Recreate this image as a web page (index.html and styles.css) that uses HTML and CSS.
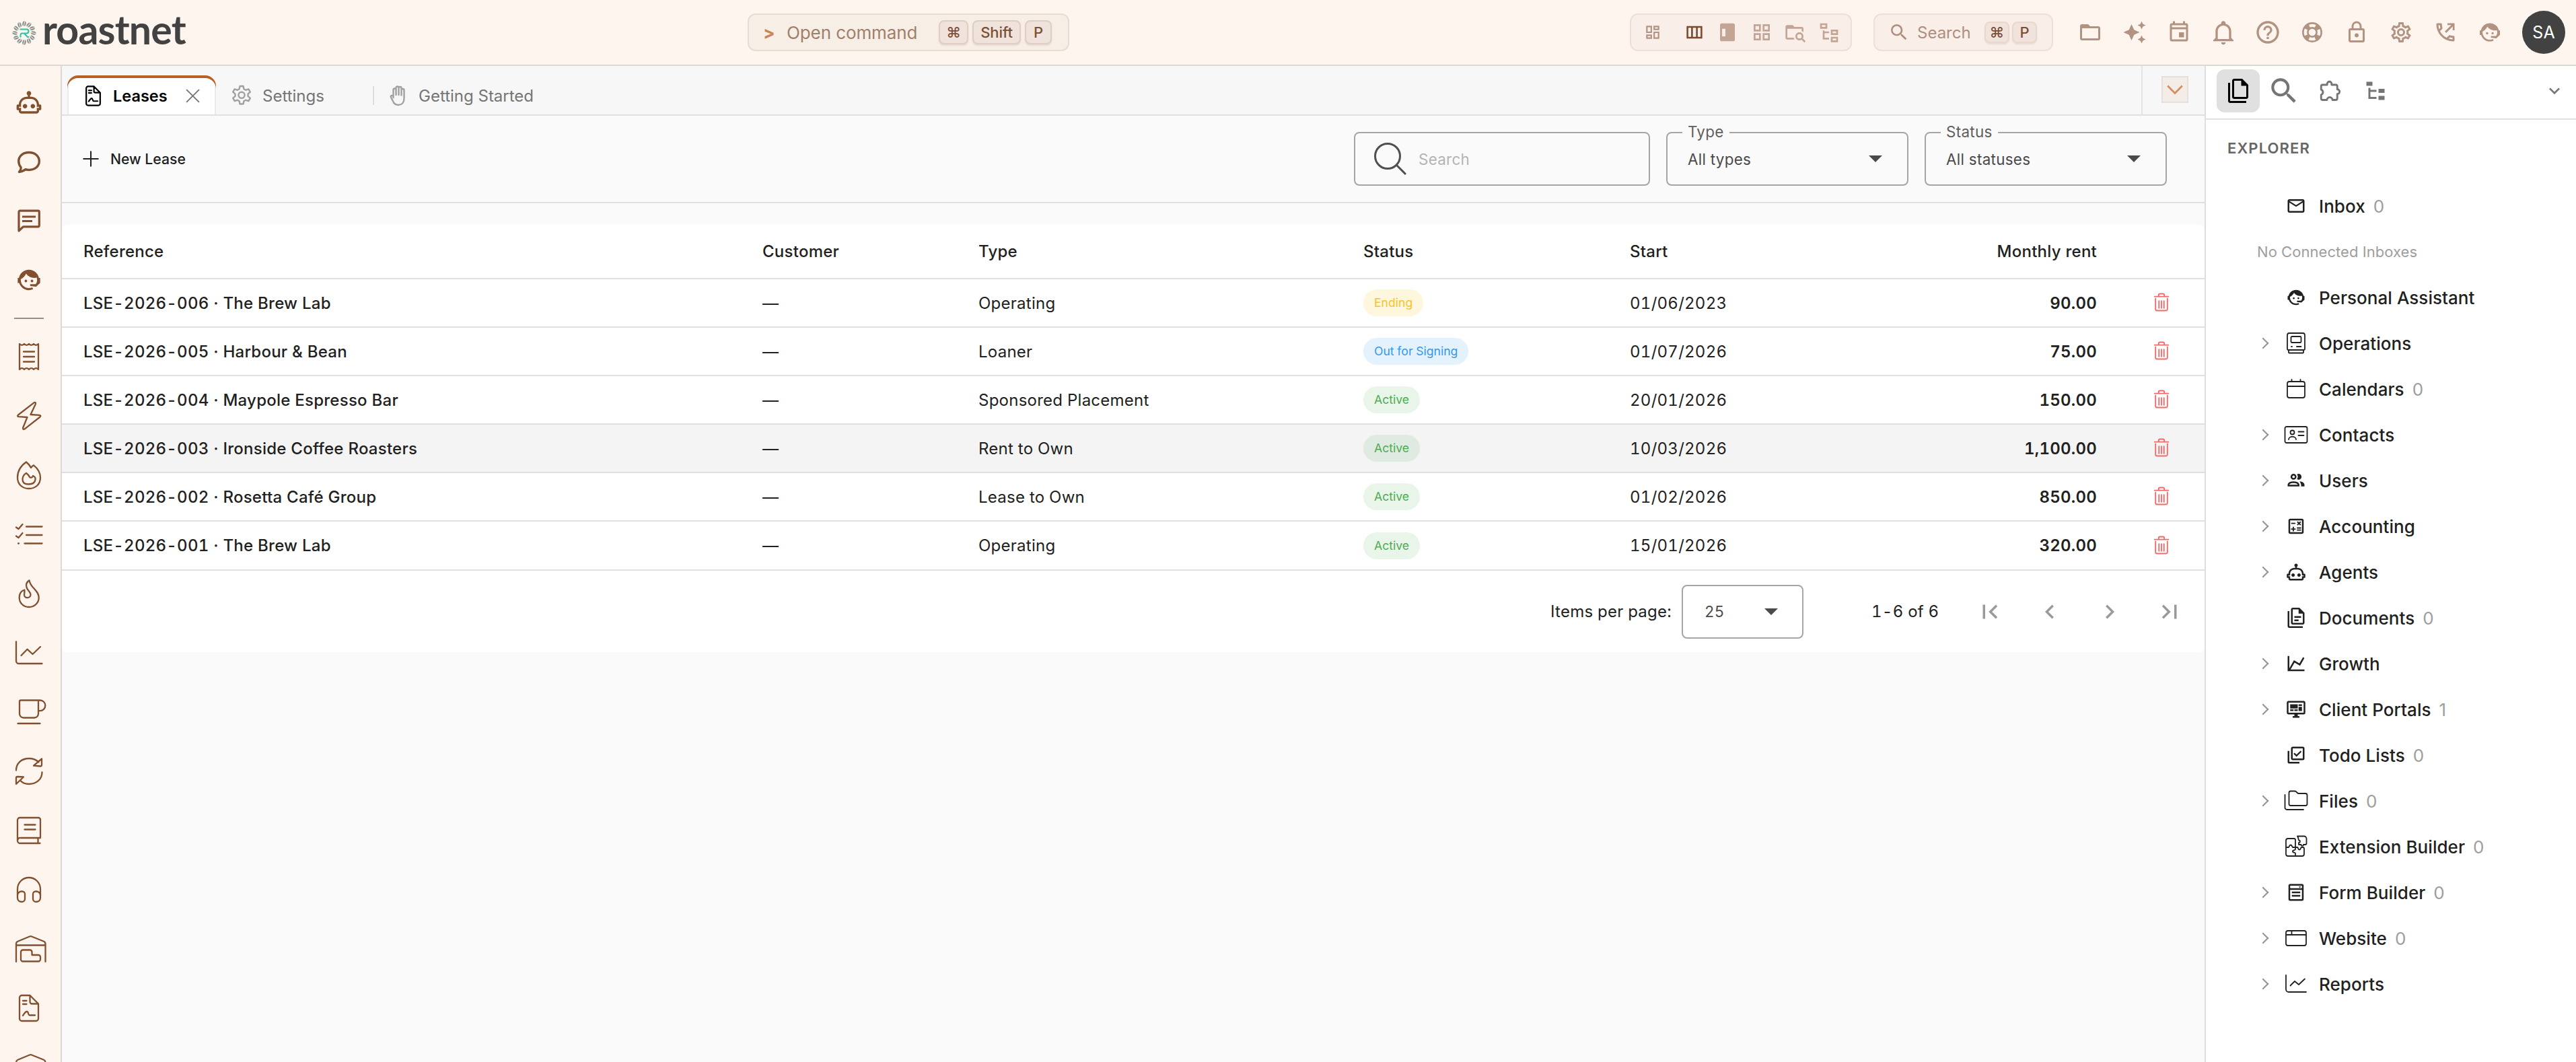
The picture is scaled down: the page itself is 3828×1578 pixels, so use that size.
FILE: index.html
```html
<!DOCTYPE html>
<html lang="en">
<head>
    <meta charset="UTF-8">
    <meta name="viewport" content="width=device-width, initial-scale=1.0">
    <title>Leases - roastnet</title>
    <link rel="stylesheet" href="styles.css">
</head>
<body>
    <!-- icon definitions -->
    <svg class="defs" width="0" height="0">
        <symbol id="i-folder" viewBox="0 0 24 24"><path d="M20,18H4V8H20M20,6H12L10,4H4C2.89,4 2,4.89 2,6V18A2,2 0 0,0 4,20H20A2,2 0 0,0 22,18V8C22,6.89 21.1,6 20,6Z"/></symbol>
        <symbol id="i-sparkle" viewBox="0 0 24 24"><path d="M19,1L17.74,3.75L15,5L17.74,6.26L19,9L20.25,6.26L23,5L20.25,3.75M9,4L6.5,9.5L1,12L6.5,14.5L9,20L11.5,14.5L17,12L11.5,9.5M19,15L17.74,17.74L15,19L17.74,20.25L19,23L20.25,20.25L23,19L20.25,17.74"/></symbol>
        <symbol id="i-event" viewBox="0 0 24 24"><path d="M19 3h-1V1h-2v2H8V1H6v2H5a2 2 0 0 0-2 2v14a2 2 0 0 0 2 2h14a2 2 0 0 0 2-2V5a2 2 0 0 0-2-2zm0 16H5V9h14v10zm0-12H5V5h14v2zM12 12h5v5h-5z"/></symbol>
        <symbol id="i-bell" viewBox="0 0 24 24"><path d="M10 21H14C14 22.1 13.1 23 12 23S10 22.1 10 21M21 19V20H3V19L5 17V11C5 7.9 7 5.2 10 4.3V4C10 2.9 10.9 2 12 2S14 2.9 14 4V4.3C17 5.2 19 7.9 19 11V17L21 19M17 11C17 8.2 14.8 6 12 6S7 8.2 7 11V18H17V11Z"/></symbol>
        <symbol id="i-help" viewBox="0 0 24 24"><path d="M11,18H13V16H11V18M12,2A10,10 0 0,0 2,12A10,10 0 0,0 12,22A10,10 0 0,0 22,12A10,10 0 0,0 12,2M12,20C7.59,20 4,16.41 4,12C4,7.59 7.59,4 12,4C16.41,4 20,7.59 20,12C20,16.41 16.41,20 12,20M12,6A4,4 0 0,0 8,10H10A2,2 0 0,1 12,8A2,2 0 0,1 14,10C14,12 11,11.75 11,15H13C13,12.75 16,12.5 16,10A4,4 0 0,0 12,6Z"/></symbol>
        <symbol id="i-buoy" viewBox="0 0 24 24"><g fill="none" stroke="currentColor"><circle cx="12" cy="12" r="9.1" stroke-width="1.8"/><circle cx="12" cy="12" r="4.4" stroke-width="1.8"/><circle cx="12" cy="12" r="6.9" stroke-width="4.4" stroke-dasharray="4.6 6.24" stroke-dashoffset="-3.12"/></g></symbol>
        <symbol id="i-lock" viewBox="0 0 24 24"><path d="M12,17C10.89,17 10,16.1 10,15C10,13.89 10.89,13 12,13A2,2 0 0,1 14,15A2,2 0 0,1 12,17M18,20V10H6V20H18M18,8A2,2 0 0,1 20,10V20A2,2 0 0,1 18,22H6C4.89,22 4,21.1 4,20V10C4,8.89 4.89,8 6,8H7V6A5,5 0 0,1 12,1A5,5 0 0,1 17,6V8H18M12,3A3,3 0 0,0 9,6V8H15V6A3,3 0 0,0 12,3Z"/></symbol>
        <symbol id="i-cog" viewBox="0 0 24 24"><path d="M12,8A4,4 0 0,1 16,12A4,4 0 0,1 12,16A4,4 0 0,1 8,12A4,4 0 0,1 12,8M12,10A2,2 0 0,0 10,12A2,2 0 0,0 12,14A2,2 0 0,0 14,12A2,2 0 0,0 12,10M10,22C9.75,22 9.54,21.82 9.5,21.58L9.13,18.93C8.5,18.68 7.96,18.34 7.44,17.94L4.95,18.95C4.73,19.03 4.46,18.95 4.34,18.73L2.34,15.27C2.21,15.05 2.27,14.78 2.46,14.63L4.57,12.97L4.5,12L4.57,11L2.46,9.37C2.27,9.22 2.21,8.95 2.34,8.73L4.34,5.27C4.46,5.05 4.73,4.96 4.95,5.05L7.44,6.05C7.96,5.66 8.5,5.32 9.13,5.07L9.5,2.42C9.54,2.18 9.75,2 10,2H14C14.25,2 14.46,2.18 14.5,2.42L14.87,5.07C15.5,5.32 16.04,5.66 16.56,6.05L19.05,5.05C19.27,4.96 19.54,5.05 19.66,5.27L21.66,8.73C21.79,8.95 21.73,9.22 21.54,9.37L19.43,11L19.5,12L19.43,13L21.54,14.63C21.73,14.78 21.79,15.05 21.66,15.27L19.66,18.73C19.54,18.95 19.27,19.04 19.05,18.95L16.56,17.95C16.04,18.34 15.5,18.68 14.87,18.93L14.5,21.58C14.46,21.82 14.25,22 14,22H10M11.25,4L10.88,6.61C9.68,6.86 8.62,7.5 7.85,8.39L5.44,7.35L4.69,8.65L6.8,10.2C6.4,11.37 6.4,12.64 6.8,13.8L4.68,15.36L5.43,16.66L7.86,15.62C8.63,16.5 9.68,17.14 10.87,17.38L11.24,20H12.76L13.13,17.39C14.32,17.14 15.37,16.5 16.14,15.62L18.57,16.66L19.32,15.36L17.2,13.81C17.6,12.64 17.6,11.37 17.2,10.2L19.31,8.65L18.56,7.35L16.15,8.39C15.38,7.5 14.32,6.86 13.12,6.62L12.75,4H11.25Z"/></symbol>
        <symbol id="i-phone" viewBox="0 0 24 24"><path d="M20,15.5C18.8,15.5 17.5,15.3 16.4,14.9C16.3,14.9 16.2,14.9 16.1,14.9C15.8,14.9 15.6,15 15.4,15.2L13.2,17.4C10.4,15.9 8,13.6 6.6,10.8L8.8,8.6C9.1,8.3 9.2,7.9 9,7.6C8.7,6.5 8.5,5.2 8.5,4C8.5,3.5 8,3 7.5,3H4C3.5,3 3,3.5 3,4C3,13.4 10.6,21 20,21C20.5,21 21,20.5 21,20V16.5C21,16 20.5,15.5 20,15.5M5,5H6.5C6.6,5.9 6.8,6.8 7,7.6L5.8,8.8C5.4,7.6 5.1,6.3 5,5M19,19C17.7,18.9 16.4,18.6 15.2,18.2L16.4,17C17.2,17.2 18.1,17.4 19,17.4V19Z"/><path d="M14 3h7v7h-1.8V6.2l-6.4 6.4-1.4-1.4L17.8 4.8H14z"/></symbol>
        <symbol id="i-agent" viewBox="0 0 24 24"><path d="M18.72,14.76C19.07,13.91 19.26,13 19.26,12C19.26,11.28 19.15,10.59 18.96,9.95C18.31,10.1 17.63,10.18 16.92,10.18C13.86,10.18 11.15,8.67 9.5,6.34C8.61,8.5 6.91,10.26 4.77,11.22C4.73,11.47 4.73,11.74 4.73,12A7.27,7.27 0 0,0 12,19.27C13.05,19.27 14.06,19.04 14.97,18.63C15.54,19.72 15.8,20.26 15.78,20.26C14.14,20.81 12.87,21.08 12,21.08C9.58,21.08 7.27,20.13 5.57,18.42C4.53,17.38 3.76,16.11 3.33,14.73H2V10.18H3.09C3.93,6.04 7.6,2.92 12,2.92C14.4,2.92 16.71,3.87 18.42,5.58C19.69,6.84 20.54,8.45 20.89,10.18H22V14.73H21.94L18.38,18L13.08,17.4V15.73H17.91L18.72,14.76M9.27,11.77A1.14,1.14 0 1,1 9.26,11.77M14.72,11.77A1.14,1.14 0 1,1 14.71,11.77Z"/></symbol>
        <symbol id="i-robot" viewBox="0 0 24 24"><path d="M17.5 15.5C17.5 16.61 16.61 17.5 15.5 17.5S13.5 16.61 13.5 15.5 14.4 13.5 15.5 13.5 17.5 14.4 17.5 15.5M8.5 13.5C7.4 13.5 6.5 14.4 6.5 15.5S7.4 17.5 8.5 17.5 10.5 16.61 10.5 15.5 9.61 13.5 8.5 13.5M23 15V18C23 18.55 22.55 19 22 19H21V20C21 21.11 20.11 22 19 22H5C3.9 22 3 21.11 3 20V19H2C1.45 19 1 18.55 1 18V15C1 14.45 1.45 14 2 14H3C3 10.13 6.13 7 10 7H11V5.73C10.4 5.39 10 4.74 10 4C10 2.9 10.9 2 12 2S14 2.9 14 4C14 4.74 13.6 5.39 13 5.73V7H14C17.87 7 21 10.13 21 14H22C22.55 14 23 14.45 23 15M21 16H19V14C19 11.24 16.76 9 14 9H10C7.24 9 5 11.24 5 14V16H3V17H5V20H19V17H21V16Z"/></symbol>
        <symbol id="i-magnify" viewBox="0 0 24 24"><path d="M9.5,3A6.5,6.5 0 0,1 16,9.5C16,11.11 15.41,12.59 14.44,13.73L14.71,14H15.5L20.5,19L19,20.5L14,15.5V14.71L13.73,14.44C12.59,15.41 11.11,16 9.5,16A6.5,6.5 0 0,1 3,9.5A6.5,6.5 0 0,1 9.5,3M9.5,5C7,5 5,7 5,9.5C5,12 7,14 9.5,14C12,14 14,12 14,9.5C14,7 12,5 9.5,5Z"/></symbol>
        <!-- header view switcher -->
        <symbol id="i-dash" viewBox="0 0 24 24"><path d="M9 5v6H5V5h4m10 0v2h-4V5h4M9 17v2H5v-2h4m10-4v6h-4v-6h4M11 3H3v10h8V3m10 0h-8v6h8V3M11 15H3v6h8v-6m10-4h-8v10h8V11z"/></symbol>
        <symbol id="i-columns" viewBox="0 0 24 24"><path fill-rule="evenodd" d="M2 4h20v16H2zm2.200 2.200v11.600h3.600V6.200zm5.800 0v11.600h4V6.200zm6.200 0v11.600h3.600V6.200z"/></symbol>
        <symbol id="i-split" viewBox="0 0 24 24"><path fill-rule="evenodd" d="M5 2h12.500a2 2 0 0 1 2 2v16a2 2 0 0 1-2 2H5a2 2 0 0 1-2-2V4a2 2 0 0 1 2-2zm.300 6v8.500H9V8z"/></symbol>
        <symbol id="i-grid" viewBox="0 0 24 24"><path d="M3 11h8V3H3m2 2h4v4H5m8 12h8v-8h-8m2 2h4v4h-4M3 21h8v-8H3m2 2h4v4H5m8-16v8h8V3m-2 6h-4V5h4z" fill-rule="evenodd"/></symbol>
        <symbol id="i-foldersearch" viewBox="0 0 24 24"><path d="M16.500 12C19 12 21 14 21 16.500C21 17.380 20.750 18.210 20.310 18.900L23.390 22L22 23.390L18.880 20.320C18.190 20.750 17.370 21 16.500 21C14 21 12 19 12 16.500C12 14 14 12 16.500 12M16.500 14A2.500 2.500 0 0 0 14 16.500A2.500 2.500 0 0 0 16.500 19A2.500 2.500 0 0 0 19 16.500A2.500 2.500 0 0 0 16.500 14M9 4L11 6H19A2 2 0 0 1 21 8V11.810C20.420 11.260 19.750 10.810 19 10.500V8H3V18H10.180C10.350 18.720 10.640 19.390 11 20H3C1.890 20 1 19.100 1 18V6C1 4.890 1.890 4 3 4H9Z"/></symbol>
        <symbol id="i-treeo" viewBox="0 0 24 24"><path fill-rule="evenodd" d="M2 2h8v6H2zm2 2v2h4V4zM14 9h8v6h-8zm2 2v2h4v-2zM14 17h8v6h-8zm2 2v2h4v-2zM5 10h2v1h5v2H7v5h5v2H5z"/></symbol>
        <symbol id="i-tree" viewBox="0 0 24 24"><path d="M3,3H9V7H3V3M15,10H21V14H15V10M15,17H21V21H15V17M13,13H7V18H13V20H5V9H7V11H13V13Z"/></symbol>
        <symbol id="i-puzzle" viewBox="0 0 24 24"><path fill="none" stroke="currentColor" stroke-width="1.900" stroke-linejoin="round" d="M9.500 6V5a2.200 2.200 0 0 1 4.400 0v1H18a1.500 1.500 0 0 1 1.500 1.500v3a2.300 2.300 0 0 1 0 4.600V19.500a1.500 1.500 0 0 1-1.500 1.500h-3.300a2.700 2.700 0 0 0-5.400 0H5A1.500 1.500 0 0 1 3.500 19.500v-3.600a2.700 2.700 0 0 0 0-5.100V7.500A1.500 1.500 0 0 1 5 6z"/></symbol>
        <symbol id="i-files" viewBox="0 0 24 24"><path d="M16 0H8C6.900 0 6 .9 6 2v16c0 1.100.9 2 2 2h12c1.100 0 2-.9 2-2V6l-6-6m4 18H8V2h7v5h5v11M4 4v18h16v2H4c-1.100 0-2-.9-2-2V4h2z"/></symbol>
        <symbol id="i-docs" viewBox="0 0 24 24"><path d="M16 0H8C6.900 0 6 .9 6 2v16c0 1.100.9 2 2 2h12c1.100 0 2-.9 2-2V6l-6-6m4 18H8V2h7v5h5v11M4 4v18h16v2H4c-1.100 0-2-.9-2-2V4h2m6 6v2h8v-2h-8m0 4v2h5v-2h-5z"/></symbol>
        <symbol id="i-down" viewBox="0 0 24 24"><path d="M7.410,8.580L12,13.170L16.590,8.580L18,10L12,16L6,10L7.410,8.580Z"/></symbol>
        <symbol id="i-prev" viewBox="0 0 24 24"><path d="M15.410,16.580L10.830,12L15.410,7.410L14,6L8,12L14,18L15.410,16.580Z"/></symbol>
        <symbol id="i-next" viewBox="0 0 24 24"><path d="M8.590,16.580L13.170,12L8.590,7.410L10,6L16,12L10,18L8.590,16.580Z"/></symbol>
        <symbol id="i-first" viewBox="0 0 24 24"><path d="M18.410,16.590L13.820,12L18.410,7.410L17,6L11,12L17,18L18.410,16.590M6,6H8V18H6V6Z"/></symbol>
        <symbol id="i-last" viewBox="0 0 24 24"><path d="M5.590,7.410L10.180,12L5.590,16.590L7,18L13,12L7,6L5.590,7.410M16,6H18V18H16V6Z"/></symbol>
        <!-- side rail -->
        <symbol id="r-bubble" viewBox="0 0 48 48"><path stroke-width="3.400" d="M9.500 39.500c2-2 3-4 2.500-7C9.500 29.500 8.700 27 8.700 23.500 8.700 16 15 10.500 24 10.500S39.300 16 39.300 23.500 33 36.500 24 36.500c-2 0-3.500-.2-5-.8-3 2.300-6 3.600-9.500 3.800z"/></symbol>
        <symbol id="r-comment" viewBox="0 0 48 48"><path stroke-width="3.200" d="M9 39V11a1.800 1.800 0 0 1 1.800-1.800H37.500A1.800 1.800 0 0 1 39.300 11V31a1.800 1.800 0 0 1-1.800 1.800H15.500z"/><path stroke-width="3" stroke-linecap="butt" d="M14 18h20M14 24.500h15"/></symbol>
        <symbol id="r-receipt" viewBox="0 0 48 48"><path d="M10 5c2.300 2.400 4.700 2.400 7 0 2.300 2.400 4.700 2.400 7 0 2.300 2.400 4.700 2.400 7 0 2.300 2.400 4.700 2.400 7 0v38c-2.300-2.400-4.700-2.400-7 0-2.300-2.400-4.700-2.400-7 0-2.300-2.400-4.700-2.400-7 0-2.300-2.400-4.700-2.400-7 0zM16 16.500h16M16 24h16M16 31.500h16"/></symbol>
        <symbol id="r-bolt" viewBox="0 0 48 48"><path d="M31.500 4.300L8 22.500c-1.500 1.300-1 2.500 1 2.700L21.500 26l-6.300 15.500c-.7 2.300.8 3 2.500 1.800L40.500 25.500c1.500-1.300.8-2.500-1-2.700L26.500 22l7.300-15.600c.8-2-.6-3.300-2.300-2.100z"/></symbol>
        <symbol id="r-campfire" viewBox="0 0 48 48"><path d="M20 4.500c2.500 2 5 4.700 7 8.500 1.200-1.700 2.300-2.700 4-3.700C37 14 41 20.500 41 27.500 41 37.500 34 44 24 44S7 37.500 7 27.500C7 18 12 10 20 4.500z"/><path d="M20 21c2.500 1.500 4 3.500 5.500 6.500 2 .7 4-.5 4.500-2.500 2.500 1 4 2.700 3.500 5.500C33 35 29 37.500 23.500 37.500S14.500 35 14.500 30.500c0-4 2-7.500 5.500-9.500z"/></symbol>
        <symbol id="r-checks" viewBox="0 0 48 48"><path d="M5 13.500l3.500 2.500 6-7M5 26.500l3.500 2.500 6-7M8 37.500h1M20 12.500h23.500M20 25h23.500M17.500 37.500h26"/></symbol>
        <symbol id="r-flame" viewBox="0 0 48 48"><path d="M24.500 4.300c-4 2.700-5.300 7-3.700 11.200 1.700 4.300 5.700 6.500 5.700 10 0 6-9.500 6-9.500.5 0-3 1-4.300.3-7.500-4.800 1.500-7.600 6-7.600 11.500C9.700 38 16 44 24 44s14.700-6 14.700-14C38.700 19 26 15.500 24.500 4.300z"/></symbol>
        <symbol id="r-chart" viewBox="0 0 48 48"><path d="M5 7.500V36a4 4 0 0 0 4 4h34.500M12.500 28l9-9.300 8 7.300L41 15"/></symbol>
        <symbol id="r-coffee" viewBox="0 0 50 48"><path d="M12 6.500h26v20a6 6 0 0 1-6 6H16a6 6 0 0 1-6-6v-18a2 2 0 0 1 2-2zM38 6.500h2.500a7.800 7.800 0 0 1 0 15.600H38M7.500 41H40.500"/></symbol>
        <symbol id="r-refresh" viewBox="0 0 48 48"><path d="M5 22.500C5 12 13 5 24 5c6 0 11 2 14.500 5.500M43 5.500L31 15.700l10 .8a2 2 0 0 0 2-2zM43.500 25.500C43.500 36 35 43 24 43c-5 0-9.500-1.500-12.500-5M5 43l11-10.500-9-.5a2 2 0 0 0-2 2z"/></symbol>
        <symbol id="r-book" viewBox="0 0 48 48"><path d="M41 35H12a4 4 0 0 0-5 4V8.500A3.500 3.500 0 0 1 10.500 5H38a3 3 0 0 1 3 3v27zM7 39a4 4 0 0 0 4 4h29.500M37.500 35v8M17.500 15.500h16M17.500 22.500h16"/></symbol>
        <symbol id="r-phones" viewBox="0 0 48 48"><path d="M7 34V23a17 17 0 0 1 34 0v11M13.500 26.500H14a4 4 0 0 1 4 4v7a4.500 4.500 0 0 1-4.500 4.500C10 42 7 40 7 36v-3.500a6 6 0 0 1 6.500-6zM34.500 26.500H34a4 4 0 0 0-4 4v7a4.500 4.500 0 0 0 4.500 4.500C38 42 41 40 41 36v-3.500a6 6 0 0 0-6.500-6z"/></symbol>
        <symbol id="r-garage" viewBox="0 0 50 48"><path d="M5 43V16.500a4 4 0 0 1 2.500-3.700L25 5.500a4 4 0 0 1 3 0L46 12.800a4 4 0 0 1 2.500 3.700V43M5 18.500h43.500"/><path d="M15 25.500h10.500a3 3 0 0 1 3 3V33h9.500a3 3 0 0 1 3 3v3.500a3 3 0 0 1-3 3H15a3 3 0 0 1-3-3v-11a3 3 0 0 1 3-3z"/></symbol>
        <symbol id="r-contract" viewBox="0 0 48 48"><path d="M25.500 5H13.500A3.500 3.500 0 0 0 10 8.500v31a3.500 3.500 0 0 0 3.500 3.500h21a3.500 3.500 0 0 0 3.500-3.500V17.500L25.500 5v9.500a3 3 0 0 0 3 3H38M15 13h5.500M15 18h5.500M15 35c2-2.500 3.500-6 6-6s1.500 5.500 4 5.500h8"/></symbol>
        <!-- misc line icons -->
        <symbol id="l-gear" viewBox="0 0 32 32"><path d="M13.500 2h5l.9 4.300 2.700 1.500 4.200-1.400 2.500 4.300-3.300 3v3.100l3.300 3-2.500 4.300-4.200-1.400-2.700 1.500-.9 4.300h-5l-.9-4.300-2.700-1.500-4.200 1.400-2.500-4.300 3.300-3v-3.100l-3.300-3 2.500-4.300 4.200 1.400 2.700-1.500z"/><circle cx="16" cy="15.300" r="4.600"/></symbol>
        <symbol id="l-hand" viewBox="0 0 32 32"><path d="M8.500 19V7.500a2 2 0 0 1 4 0V15M12.500 7.500V4.500a2 2 0 0 1 4 0V15M16.500 5a2 2 0 0 1 4 0v10.500M20.500 8a2 2 0 0 1 4 0v12.500c0 6-3.500 9.500-8.500 9.500-4 0-6.500-2-8-5.500L5 18.500c-1-2 1.500-3.800 3.500-1.500"/></symbol>
        <symbol id="l-trash" viewBox="0 0 28 32"><path d="M3 7h22M9.500 7V4.500A2 2 0 0 1 11.500 2.500h5a2 2 0 0 1 2 2V7M4.500 10v17a2.500 2.500 0 0 0 2.500 2.500h14a2.500 2.500 0 0 0 2.500-2.500V10M10 14v11.500M14 14v11.500M18 14v11.500"/></symbol>
        <!-- explorer tree -->
        <symbol id="t-mail" viewBox="0 0 24 24"><path d="M22 6C22 4.900 21.100 4 20 4H4C2.900 4 2 4.900 2 6V18C2 19.100 2.900 20 4 20H20C21.100 20 22 19.100 22 18V6M20 6L12 11L4 6H20M20 18H4V8L12 13L20 8V18Z"/></symbol>
        <symbol id="t-machine" viewBox="0 0 36 36"><path d="M8 3h20a3 3 0 0 1 3 3v20.500a1.500 1.500 0 0 1-1.500 1.500h-23A1.500 1.500 0 0 1 5 26.500V6a3 3 0 0 1 3-3zM12 8h12a1.500 1.500 0 0 1 1.500 1.500v6A1.500 1.500 0 0 1 24 17H12a1.500 1.500 0 0 1-1.500-1.500v-6A1.500 1.500 0 0 1 12 8zM11 23h1M19 23h6.500M7 28v3.500a1 1 0 0 0 1 1h20a1 1 0 0 0 1-1V28"/></symbol>
        <symbol id="t-cal" viewBox="0 0 36 36"><path d="M8 7h20a3 3 0 0 1 3 3v18a3 3 0 0 1-3 3H8a3 3 0 0 1-3-3V10a3 3 0 0 1 3-3zM5 14h26M11.500 4v3M24.500 4v3"/></symbol>
        <symbol id="t-card" viewBox="0 0 36 36"><path d="M4 6h28a2.500 2.500 0 0 1 2.500 2.500v19a2.500 2.500 0 0 1-2.500 2.500H4a2.500 2.500 0 0 1-2.500-2.500v-19A2.500 2.500 0 0 1 4 6zM7 25c0-5.500 11-5.500 11 0M21.500 13.500h8M21.500 19h8"/><circle cx="12.500" cy="14.500" r="3"/></symbol>
        <symbol id="t-users" viewBox="0 0 24 24"><path d="M13.070 10.410A5 5 0 0 0 13.070 4.590A3.390 3.390 0 0 1 15 4A3.500 3.500 0 0 1 15 11A3.390 3.390 0 0 1 13.070 10.410M5.500 7.500A3.500 3.500 0 1 1 9 11A3.500 3.500 0 0 1 5.500 7.500M7.500 7.500A1.500 1.500 0 1 0 9 6A1.500 1.500 0 0 0 7.500 7.500M16 17V19H2V17S2 13 9 13 16 17 16 17M14 17C13.860 16.220 12.670 15 9 15S4.070 16.310 4 17M15.950 13A5.320 5.320 0 0 1 18 17V19H22V17S22 13.370 15.940 13Z"/></symbol>
        <symbol id="t-calc" viewBox="0 0 24 24"><path d="M19,3H5C3.900,3 3,3.900 3,5V19C3,20.100 3.900,21 5,21H19C20.100,21 21,20.100 21,19V5C21,3.900 20.100,3 19,3M19,19H5V5H19V19M6.200,7.700H11.200V9.200H6.200V7.700M13,15.800H18V17.200H13V15.800M13,13.200H18V14.700H13V13.200M8,18H9.500V16H11.500V14.500H9.500V12.500H8V14.500H6V16H8V18M14.100,10.900L15.500,9.500L16.900,10.900L18,9.900L16.600,8.500L18,7.100L16.900,6L15.500,7.400L14.100,6L13,7.100L14.400,8.500L13,9.900L14.100,10.900Z"/></symbol>
        <symbol id="t-growth" viewBox="0 0 24 24"><path d="M16,11.780L20.240,4.450L21.970,5.450L16.740,14.500L10.230,10.750L5.460,19H22V21H2V3H4V17.540L9.500,8L16,11.780Z"/></symbol>
        <symbol id="t-monitor" viewBox="0 0 24 24"><path d="M21,16V4H3V16H21M21,2A2,2 0 0,1 23,4V16A2,2 0 0,1 21,18H14V20H16V22H8V20H10V18H3C1.890,18 1,17.100 1,16V4C1,2.890 1.890,2 3,2H21M5,6H14V11H5V6M15,6H19V8H15V6M19,9V14H15V9H19M5,12H9V14H5V12M10,12H14V14H10V12Z"/></symbol>
        <symbol id="t-todo" viewBox="0 0 24 24"><path d="M20,16V4H8V16H20M22,16A2,2 0 0,1 20,18H8C6.890,18 6,17.100 6,16V4C6,2.890 6.890,2 8,2H20A2,2 0 0,1 22,4V16M16,20V22H4A2,2 0 0,1 2,20V7H4V20H16M12.500,14L8.900,10.400L10.200,9.100L12.500,11.400L17.300,6.700L18.600,8L12.500,14Z"/></symbol>
        <symbol id="t-folders" viewBox="0 0 36 36"><path d="M10 3.500h6c1 0 1.700.3 2.300 1l1.500 1.500c.6.600 1.200 1 2 1H32a2.500 2.500 0 0 1 2.500 2.500v13A2.500 2.500 0 0 1 32 25H10a2.500 2.500 0 0 1-2.500-2.500V6A2.500 2.500 0 0 1 10 3.500zM1.500 9v19a3 3 0 0 0 3 3H29"/></symbol>
        <symbol id="t-ext" viewBox="0 0 36 36"><path d="M3 19V9a3 3 0 0 1 3-3h9a2 2 0 0 1 2 2v11M3 19h4c1 0 .5-3.500 3-3.500S12 19 13 19h4v3c0 1.500-4 .5-4 3s4 1.500 4 3v4H6a3 3 0 0 1-3-3zM17 19h3c1.500 0 .5 3.500 3 3.500s1.500-3.500 3-3.500h2a2 2 0 0 1 2 2v8a3 3 0 0 1-3 3H17M22 2.500h8a3.500 3.500 0 0 1 3.500 3.500v7a2 2 0 0 1-2 2h-2.500c0 2.500-3.500 2.500-3.500 0H22v-3c2.500 0 2.500-3.500 0-3.500-1-3 0-3-2-6z"/></symbol>
        <symbol id="t-form" viewBox="0 0 24 24"><path fill-rule="evenodd" d="M5 2h14a2 2 0 0 1 2 2v16a2 2 0 0 1-2 2H5a2 2 0 0 1-2-2V4a2 2 0 0 1 2-2zm0 2v3h14V4zm0 5v11h14V9zm10-4h3l-1.500 1.500zM7 11h10v2H7zm0 4h10v2H7z"/></symbol>
        <symbol id="t-window" viewBox="0 0 36 36"><path d="M6 7h24a3 3 0 0 1 3 3v16a3 3 0 0 1-3 3H6a3 3 0 0 1-3-3V10a3 3 0 0 1 3-3zM3 13h30M11.500 7v6"/></symbol>
        <symbol id="t-reports" viewBox="0 0 36 36"><path d="M3 5v21a4 4 0 0 0 4 4h26M9.500 20.500L16 14l6 5 9-8.500"/></symbol>
        <!-- one coffee bean of the logo ring -->
        <symbol id="bean" viewBox="0 0 36 36"><ellipse cx="18" cy="4.200" rx="2.700" ry="3.900" transform="rotate(14 18 4.200)" fill="#8a908d"/><path d="M17.300 8.200L18.800.4" stroke="#fef5ef" stroke-width="1"/></symbol>
    </svg>

    <header class="topbar">
        <a class="brand" href="#">
            <svg class="brand-mark" viewBox="0 0 36 36">
                <use href="#bean" width="36" height="36"/>
                <use href="#bean" width="36" height="36" transform="rotate(30 18 18)"/>
                <use href="#bean" width="36" height="36" transform="rotate(60 18 18)"/>
                <use href="#bean" width="36" height="36" transform="rotate(90 18 18)"/>
                <use href="#bean" width="36" height="36" transform="rotate(120 18 18)"/>
                <use href="#bean" width="36" height="36" transform="rotate(150 18 18)"/>
                <use href="#bean" width="36" height="36" transform="rotate(180 18 18)"/>
                <use href="#bean" width="36" height="36" transform="rotate(210 18 18)"/>
                <use href="#bean" width="36" height="36" transform="rotate(240 18 18)"/>
                <use href="#bean" width="36" height="36" transform="rotate(270 18 18)"/>
                <use href="#bean" width="36" height="36" transform="rotate(300 18 18)"/>
                <use href="#bean" width="36" height="36" transform="rotate(330 18 18)"/>
                <path fill="none" stroke="#2cc3a4" stroke-width="2" stroke-linejoin="round" d="M11.500 12.500h10a3 3 0 0 1 0 6H15a2.500 2.500 0 0 0-2.500 2.500v3.500M18 18.500l5 5.500h2"/>
            </svg>
            <span class="brand-name">roastnet</span>
        </a>

        <div class="command">
            <span class="prompt">&gt;</span>
            <span class="command-label">Open command</span>
            <kbd class="sym">⌘</kbd><kbd class="word">Shift</kbd><kbd>P</kbd>
        </div>

        <div class="topbar-right">
            <div class="views">
                <svg><use href="#i-dash"/></svg>
                <span class="views-sep"></span>
                <svg class="on"><use href="#i-columns"/></svg>
                <svg class="big"><use href="#i-split"/></svg>
                <svg class="big"><use href="#i-grid"/></svg>
                <svg class="big"><use href="#i-foldersearch"/></svg>
                <svg class="big"><use href="#i-treeo"/></svg>
            </div>
            <div class="quick-search">
                <svg><use href="#i-magnify"/></svg>
                <span>Search</span>
                <kbd>⌘</kbd><kbd>P</kbd>
            </div>
            <nav class="actions">
                <svg><use href="#i-folder"/></svg>
                <svg><use href="#i-sparkle"/></svg>
                <svg><use href="#i-event"/></svg>
                <svg class="lg"><use href="#i-bell"/></svg>
                <svg class="lg"><use href="#i-help"/></svg>
                <svg><use href="#i-buoy"/></svg>
                <svg><use href="#i-lock"/></svg>
                <svg><use href="#i-cog"/></svg>
                <svg><use href="#i-phone"/></svg>
                <svg><use href="#i-agent"/></svg>
            </nav>
            <div class="avatar">SA</div>
        </div>
    </header>

    <div class="layout">
        <aside class="rail">
            <svg class="mdi"><use href="#i-robot"/></svg>
            <svg><use href="#r-bubble"/></svg>
            <svg><use href="#r-comment"/></svg>
            <svg class="mdi"><use href="#i-agent"/></svg>
            <hr>
            <svg><use href="#r-receipt"/></svg>
            <svg><use href="#r-bolt"/></svg>
            <svg><use href="#r-campfire"/></svg>
            <svg><use href="#r-checks"/></svg>
            <svg><use href="#r-flame"/></svg>
            <svg><use href="#r-chart"/></svg>
            <svg class="wide"><use href="#r-coffee"/></svg>
            <svg><use href="#r-refresh"/></svg>
            <svg><use href="#r-book"/></svg>
            <svg><use href="#r-phones"/></svg>
            <svg class="wide"><use href="#r-garage"/></svg>
            <svg><use href="#r-contract"/></svg>
            <svg class="wide"><use href="#r-garage"/></svg>
        </aside>

        <main class="main">
            <div class="tabs">
                <div class="tab active">
                    <svg class="tab-icon file" viewBox="9 3 30 42"><use href="#r-contract" width="48" height="48"/></svg>
                    <span>Leases</span>
                    <svg class="tab-close" viewBox="0 0 20 20"><path d="M1 1l18 18M19 1L1 19"/></svg>
                </div>
                <div class="tab settings">
                    <svg class="tab-icon"><use href="#l-gear"/></svg>
                    <span>Settings</span>
                </div>
                <div class="tab getting">
                    <svg class="tab-icon"><use href="#l-hand"/></svg>
                    <span>Getting Started</span>
                </div>
                <div class="tabs-more">
                    <button><svg viewBox="0 0 24 24"><path d="M2 7l10 10L22 7"/></svg></button>
                </div>
            </div>

            <div class="toolbar">
                <button class="new-lease">
                    <svg viewBox="0 0 24 24"><path d="M12 .5v23M.5 12h23"/></svg>
                    New Lease
                </button>
                <div class="filters">
                    <div class="field search">
                        <svg viewBox="0 0 48 48"><circle cx="20" cy="20" r="18.500"/><path d="M33 33l14 14"/></svg>
                        <span>Search</span>
                    </div>
                    <div class="field select"><label>Type</label><span>All types</span><i></i></div>
                    <div class="field select"><label>Status</label><span>All statuses</span><i></i></div>
                </div>
            </div>

            <section class="panel">
                <table>
                    <colgroup>
                        <col class="c-ref"><col class="c-customer"><col class="c-type"><col class="c-status"><col class="c-start"><col class="c-rent"><col class="c-actions">
                    </colgroup>
                    <thead>
                        <tr><th>Reference</th><th>Customer</th><th>Type</th><th>Status</th><th>Start</th><th class="num">Monthly rent</th><th></th></tr>
                    </thead>
                    <tbody>
                        <tr>
                            <td class="ref">LSE-2026-006 · The Brew Lab</td><td>—</td><td>Operating</td>
                            <td><span class="chip ending">Ending</span></td><td>01/06/2023</td><td class="num">90.00</td>
                            <td class="del"><svg><use href="#l-trash"/></svg></td>
                        </tr>
                        <tr>
                            <td class="ref">LSE-2026-005 · Harbour &amp; Bean</td><td>—</td><td>Loaner</td>
                            <td><span class="chip signing">Out for Signing</span></td><td>01/07/2026</td><td class="num">75.00</td>
                            <td class="del"><svg><use href="#l-trash"/></svg></td>
                        </tr>
                        <tr>
                            <td class="ref">LSE-2026-004 · Maypole Espresso Bar</td><td>—</td><td>Sponsored Placement</td>
                            <td><span class="chip live">Active</span></td><td>20/01/2026</td><td class="num">150.00</td>
                            <td class="del"><svg><use href="#l-trash"/></svg></td>
                        </tr>
                        <tr class="hovered">
                            <td class="ref">LSE-2026-003 · Ironside Coffee Roasters</td><td>—</td><td>Rent to Own</td>
                            <td><span class="chip live">Active</span></td><td>10/03/2026</td><td class="num">1,100.00</td>
                            <td class="del"><svg><use href="#l-trash"/></svg></td>
                        </tr>
                        <tr>
                            <td class="ref">LSE-2026-002 · Rosetta Café Group</td><td>—</td><td>Lease to Own</td>
                            <td><span class="chip live">Active</span></td><td>01/02/2026</td><td class="num">850.00</td>
                            <td class="del"><svg><use href="#l-trash"/></svg></td>
                        </tr>
                        <tr>
                            <td class="ref">LSE-2026-001 · The Brew Lab</td><td>—</td><td>Operating</td>
                            <td><span class="chip live">Active</span></td><td>15/01/2026</td><td class="num">320.00</td>
                            <td class="del"><svg><use href="#l-trash"/></svg></td>
                        </tr>
                    </tbody>
                </table>
                <footer class="pager">
                    <span>Items per page:</span>
                    <div class="field page-size"><span>25</span><i></i></div>
                    <span class="range">1-6 of 6</span>
                    <div class="pager-nav">
                        <svg><use href="#i-first"/></svg>
                        <svg><use href="#i-prev"/></svg>
                        <svg><use href="#i-next"/></svg>
                        <svg><use href="#i-last"/></svg>
                    </div>
                </footer>
            </section>
        </main>

        <aside class="explorer">
            <div class="explorer-tools">
                <span class="tool on"><svg><use href="#i-files"/></svg></span>
                <span class="tool find"><svg><use href="#i-magnify"/></svg></span>
                <span class="tool"><svg><use href="#i-puzzle"/></svg></span>
                <span class="tool"><svg><use href="#i-tree"/></svg></span>
                <svg class="collapse"><use href="#i-down"/></svg>
            </div>
            <h2>EXPLORER</h2>
            <ul class="tree">
                <li><svg class="mdi"><use href="#t-mail"/></svg>Inbox<em>0</em></li>
                <li class="note">No Connected Inboxes</li>
                <li><svg class="mdi"><use href="#i-agent"/></svg>Personal Assistant</li>
                <li class="parent"><svg class="line"><use href="#t-machine"/></svg>Operations</li>
                <li><svg class="line"><use href="#t-cal"/></svg>Calendars<em>0</em></li>
                <li class="parent"><svg class="line"><use href="#t-card"/></svg>Contacts</li>
                <li class="parent"><svg class="mdi"><use href="#t-users"/></svg>Users</li>
                <li class="parent"><svg class="mdi"><use href="#t-calc"/></svg>Accounting</li>
                <li class="parent"><svg class="mdi"><use href="#i-robot"/></svg>Agents</li>
                <li><svg class="mdi"><use href="#i-docs"/></svg>Documents<em>0</em></li>
                <li class="parent"><svg class="mdi"><use href="#t-growth"/></svg>Growth</li>
                <li class="parent"><svg class="mdi"><use href="#t-monitor"/></svg>Client Portals<em>1</em></li>
                <li><svg class="mdi"><use href="#t-todo"/></svg>Todo Lists<em>0</em></li>
                <li class="parent"><svg class="line"><use href="#t-folders"/></svg>Files<em>0</em></li>
                <li><svg class="line"><use href="#t-ext"/></svg>Extension Builder<em>0</em></li>
                <li class="parent"><svg class="mdi"><use href="#t-form"/></svg>Form Builder<em>0</em></li>
                <li class="parent"><svg class="line"><use href="#t-window"/></svg>Website<em>0</em></li>
                <li class="parent"><svg class="line"><use href="#t-reports"/></svg>Reports</li>
            </ul>
        </aside>
    </div>
</body>
</html>
```
FILE: styles.css
```css
* {
    box-sizing: border-box;
}
body {
    margin: 0;
    height: 100vh;
    display: flex;
    flex-direction: column;
    overflow: hidden;
    font-family: Inter, "Liberation Sans", sans-serif;
    font-size: 24px;
    color: #212121;
    background-color: #fafafa;
}
svg {
    display: block;
    flex: none;
    fill: currentColor;
}
.defs {
    position: absolute;
}
button {
    font: inherit;
    color: inherit;
    background: none;
    border: none;
    padding: 0;
}

/* top bar */
.topbar {
    flex: none;
    height: 98px;
    display: flex;
    align-items: center;
    justify-content: space-between;
    border-bottom: 2px solid #ded8d2;
    background-color: #fef5ef;
    padding: 0 16px 0 18px;
}
.brand {
    display: flex;
    align-items: center;
    width: 1093px;
    color: #424242;
    text-decoration: none;
}
.brand-mark {
    width: 36px;
    height: 36px;
    margin-top: 2px;
}
.brand-name {
    margin: -8px 0 0 9px;
    font-family: Lato, sans-serif;
    font-weight: 700;
    font-size: 59px;
    line-height: 60px;
    letter-spacing: -0.8px;
}
.command {
    display: flex;
    align-items: center;
    width: 478px;
    height: 56px;
    padding-left: 21px;
    border: 2px solid #e8dbd2;
    border-radius: 12px;
    background-color: #f7eee5;
    color: #a07f6b;
    font-size: 26px;
    letter-spacing: -0.1px;
}
.prompt {
    width: 35px;
    color: #cc8356;
    font-weight: 700;
}
.command-label {
    width: 226px;
}
kbd {
    display: flex;
    align-items: center;
    justify-content: center;
    width: 40px;
    height: 36px;
    margin-right: 6px;
    border: 2px solid #dfcec5;
    border-radius: 8px;
    background-color: #efe3db;
    box-shadow: 0 2px 2px rgba(121, 85, 72, 0.12);
    color: #7b4f36;
    font-family: inherit;
    font-size: 22px;
    font-weight: 500;
}
kbd.sym {
    width: 44px;
}
kbd.word {
    width: 72px;
}
.topbar-right {
    display: flex;
    align-items: center;
    margin-left: auto;
}
.views {
    display: flex;
    align-items: center;
    width: 330px;
    height: 56px;
    padding-left: 19px;
    border: 2px solid #eee0d9;
    border-radius: 12px;
    background-color: #f9eee8;
    color: #c3a595;
}
.views svg {
    width: 26px;
    height: 26px;
    margin-right: 17px;
}
.views svg:first-child {
    color: #b29280;
}
.views .on {
    width: 28px;
    height: 28px;
    margin-right: 20px;
    color: #7b4a2e;
}
.views .big {
    width: 32px;
    height: 32px;
    margin-right: 18px;
}
.views-sep {
    width: 2px;
    height: 28px;
    margin-right: 18px;
    background-color: #dcc8bc;
}
.quick-search {
    display: flex;
    align-items: center;
    width: 267px;
    height: 56px;
    margin-left: 32px;
    padding-left: 20px;
    border: 2px solid #eee0d9;
    border-radius: 12px;
    background-color: #f9eee8;
    color: #ae8f7e;
}
.quick-search svg {
    width: 32px;
    height: 32px;
}
.quick-search span {
    width: 99px;
    padding-left: 11px;
    margin-right: 12px;
}
.quick-search kbd {
    width: 37px;
    height: 32px;
    margin-right: 4px;
    border-color: #ead8ce;
}
.actions {
    display: flex;
    align-items: center;
    margin-left: 37px;
    margin-right: 30px;
    color: #b29280;
}
.actions svg {
    width: 36px;
    height: 36px;
    margin-right: 30px;
}
.actions .lg {
    width: 40px;
    height: 40px;
    margin-left: -2px;
    margin-right: 28px;
}
.actions svg:last-child {
    margin-right: 0;
}
.avatar {
    width: 64px;
    height: 64px;
    border-radius: 50%;
    background-color: #424242;
    color: white;
    font-size: 25px;
    line-height: 64px;
    text-align: center;
}

.layout {
    flex: 1;
    min-height: 0;
    display: flex;
}

/* side rail */
.rail {
    flex: none;
    width: 92px;
    display: flex;
    flex-direction: column;
    align-items: flex-start;
    gap: 40px;
    padding: 30px 0 0 19px;
    border-right: 2px solid #ded8d4;
    background-color: #fef5ef;
    color: #82502f;
    overflow: hidden;
}
.rail svg {
    width: 48px;
    height: 48px;
    fill: none;
    stroke: currentColor;
    stroke-width: 2.3;
    stroke-linecap: round;
    stroke-linejoin: round;
}
.rail .wide {
    width: 50px;
}
.rail .mdi {
    width: 40px;
    height: 40px;
    margin: 4px;
    fill: currentColor;
    stroke: none;
}
.rail hr {
    flex: none;
    width: 44px;
    height: 2px;
    margin: -8px 0 -8px 2px;
    border: none;
    background-color: #9c8c80;
}

/* main column */
.main {
    flex: 1;
    min-width: 0;
    border-right: 2px solid #dedede;
}
.tabs {
    display: flex;
    height: 74px;
    padding-left: 8px;
    border-bottom: 2px solid #e0e0e0;
    background-color: #f7f7f7;
    color: #757575;
}
.tab {
    display: flex;
    align-items: center;
    margin-top: 14px;
    padding-top: 2px;
}
.tab.active {
    width: 221px;
    padding-left: 27px;
    border-radius: 16px 16px 0 0;
    background-color: white;
    box-shadow: inset 0 4px 0 #b85f22, inset 2px 0 0 #ebebeb, inset -2px 0 0 #ebebeb;
    color: black;
    font-weight: 600;
}
.tab-icon {
    width: 32px;
    height: 32px;
    fill: none;
    stroke: #a0a0a0;
    stroke-width: 2.4;
    stroke-linejoin: round;
    stroke-linecap: round;
}
.tab-icon.file {
    width: 23px;
    height: 31px;
    stroke: black;
    stroke-width: 3;
}
.tab.active span {
    width: 126px;
    padding-left: 18px;
    font-size: 23.5px;
}
.tab-close {
    width: 21px;
    height: 21px;
    fill: none;
    stroke: #777;
    stroke-width: 1.8;
}
.tab.settings {
    width: 233px;
    padding-left: 22px;
}
.tab.getting {
    padding-left: 21px;
}
.tab.getting::before {
    content: "";
    width: 2px;
    height: 28px;
    margin: 0 20px 0 -21px;
    background-color: #dcdcdc;
}
.tab.settings span {
    padding-left: 15px;
}
.tab.getting span {
    padding-left: 14px;
}
.tabs-more {
    width: 94px;
    margin-left: auto;
    padding: 15px 0 0 28px;
    border-left: 2px solid #e4e4e4;
}
.tabs-more button {
    display: flex;
    align-items: center;
    justify-content: center;
    width: 40px;
    height: 40px;
    border: 2px solid #e3e0de;
    background-color: #f4ece7;
}
.tabs-more svg {
    width: 26px;
    height: 26px;
    fill: none;
    stroke: #d28f64;
    stroke-width: 2.6;
}
.toolbar {
    display: flex;
    align-items: center;
    height: 130px;
    padding: 0 56px 0 31px;
    border-bottom: 2px solid #e0e0e0;
}
.new-lease {
    display: flex;
    align-items: center;
    gap: 17px;
    font-size: 21.2px;
    font-weight: 500;
}
.new-lease svg {
    width: 24px;
    height: 24px;
    stroke: #212121;
    stroke-width: 2;
}
.filters {
    display: flex;
    gap: 24px;
    margin-left: auto;
}
.field {
    position: relative;
    display: flex;
    align-items: center;
    width: 360px;
    height: 80px;
    padding: 0 37px 0 30px;
    border: 2px solid #a5a5a5;
    border-radius: 8px;
    color: #4a4a4a;
    font-size: 22.4px;
    letter-spacing: 0.3px;
}
.field.search {
    width: 440px;
    padding-left: 28px;
    color: #b4b4b4;
}
.field.search svg {
    width: 48px;
    height: 48px;
    margin-right: 18px;
    fill: none;
    stroke: #4f4f4f;
    stroke-width: 3;
}
/* label sits on the top outline */
.field label {
    position: absolute;
    top: -17px;
    left: 22px;
    padding: 0 8px;
    line-height: 30px;
    background-color: #fafafa;
    color: #5f5f5f;
}
.field i {
    margin-left: auto;
    border: 10px solid transparent;
    border-top-color: #4a4a4a;
    border-bottom-width: 0;
}

/* leases table */
.panel {
    margin-top: 32px;
    height: 635px;
    border-radius: 8px;
    background-color: white;
    letter-spacing: 0.25px;
    font-feature-settings: "tnum";
}
table {
    width: 100%;
    table-layout: fixed;
    border-collapse: separate;
    border-spacing: 0;
}
.c-ref { width: 1009px; }
.c-customer { width: 321px; }
.c-type { width: 572px; }
.c-status { width: 396px; }
.c-start { width: 379px; }
.c-rent { width: 379px; }
th, td {
    height: 72px;
    padding: 0 32px;
    border-bottom: 2px solid #e0e0e0;
    text-align: left;
    white-space: nowrap;
}
th {
    height: 81px;
    font-weight: 500;
}
tbody tr:last-child td {
    border-bottom: none;
    height: 71px;
}
.ref {
    font-weight: 500;
}
.num {
    text-align: right;
}
td.num {
    font-weight: 600;
}
.hovered {
    background-color: #f4f4f4;
}
.chip {
    display: inline-block;
    height: 40px;
    padding: 0 16px;
    border-radius: 20px;
    font-size: 17.6px;
    line-height: 40px;
    letter-spacing: 0;
    vertical-align: middle;
}
.chip.ending { background-color: #fef7dd; color: #f9c326; }
.chip.signing { background-color: #e3f2fd; color: #3598ec; }
.chip.live { background-color: #e9f5e9; color: #4fab53; }
.hovered .chip.live { background-color: #dfeae0; }
.del {
    padding: 0 0 0 51px;
}
.del svg {
    width: 26px;
    height: 30px;
    margin-top: -2px;
    fill: none;
    stroke: #ee6c69;
    stroke-width: 2;
    stroke-linecap: round;
}
.pager {
    display: flex;
    align-items: center;
    justify-content: flex-end;
    height: 123px;
    border-top: 2px solid #e0e0e0;
}
.page-size {
    width: 181px;
    margin-left: 15px;
    padding: 0 36px 0 32px;
}
.range {
    width: 155px;
    margin-left: 101px;
}
.pager-nav {
    display: flex;
    gap: 47px;
    margin-right: 31px;
    color: #9a9a9a;
}
.pager-nav svg {
    width: 42px;
    height: 42px;
}

/* explorer */
.explorer {
    flex: none;
    width: 550px;
    background-color: white;
}
.explorer-tools {
    display: flex;
    align-items: center;
    gap: 4px;
    height: 80px;
    padding: 0 16px 4px;
    border-bottom: 2px solid #e0e0e0;
    color: #757575;
}
.tool {
    display: flex;
    align-items: center;
    justify-content: center;
    width: 64px;
    height: 64px;
    border-radius: 12px;
}
.tool.on {
    background-color: #e0e0e0;
    color: black;
}
.tool svg {
    width: 36px;
    height: 36px;
}
.tool.find svg {
    width: 50px;
    height: 50px;
}
.collapse {
    width: 32px;
    height: 32px;
    margin-left: auto;
}
.explorer h2 {
    margin: 26px 0 0 32px;
    font-size: 22px;
    line-height: 32px;
    font-weight: 600;
    letter-spacing: 1.1px;
    color: #666;
}
.tree {
    list-style: none;
    margin: 36px 0 0;
    padding: 0;
    font-size: 26px;
    font-weight: 500;
    letter-spacing: 0.05px;
}
.tree li {
    position: relative;
    display: flex;
    align-items: center;
    height: 68px;
    padding-left: 116px;
}
.tree svg {
    width: 36px;
    height: 36px;
    margin-right: 16px;
}
.tree .mdi {
    width: 30px;
    height: 30px;
    margin: 0 19px 0 3px;
}
.tree .line {
    fill: none;
    stroke: currentColor;
    stroke-width: 1.8;
    stroke-linecap: round;
    stroke-linejoin: round;
}
.tree .note {
    padding-left: 76px;
    font-size: 22px;
    font-weight: 400;
    color: #9e9e9e;
}
.tree .parent::before {
    content: "";
    position: absolute;
    left: 79px;
    width: 10px;
    height: 10px;
    border: solid #949494;
    border-width: 2px 2px 0 0;
    transform: rotate(45deg);
}
.tree em {
    margin-left: 12px;
    font-style: normal;
    font-weight: 400;
    color: #9e9e9e;
}
```
